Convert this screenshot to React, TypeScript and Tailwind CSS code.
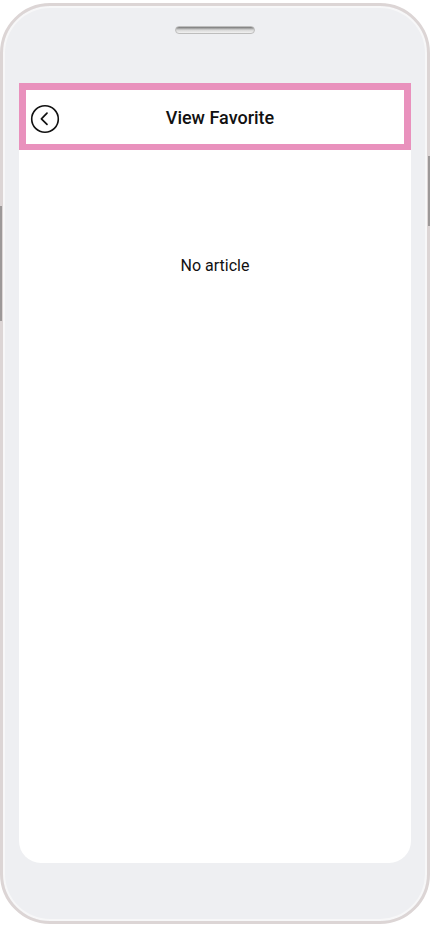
import React from "react";

function BackIcon() {
  return (
    <svg width="30" height="30" viewBox="0 0 30 30" fill="none">
      <circle cx="15" cy="15" r="13.3" stroke="#111" strokeWidth="1.6" />
      <path d="M17 9.2 L11.4 14.8 L17 20.4" stroke="#111" strokeWidth="1.7" strokeLinecap="round" strokeLinejoin="round" />
    </svg>
  );
}

export default function App() {
  return (
    <div className="w-[430px] h-[925px] bg-white pt-[3px]" style={{ fontFamily: "Roboto, 'Liberation Sans', sans-serif" }}>
      <div className="relative w-[430px] h-[921px] rounded-[50px] border-[3px] border-[#dcd5d5] bg-[#eeeff2] shadow-[inset_0_0_0_2px_#f7f7f8] flex flex-col items-center">
        {/* side buttons */}
        <div className="absolute left-[-3px] top-[200px] w-[2px] h-[115px] bg-[#9c9898]" />
        <div className="absolute right-[-3px] top-[150px] w-[2px] h-[70px] bg-[#9c9898]" />

        {/* speaker */}
        <div className="mt-[20px] w-[80px] h-[8px] rounded-full bg-gradient-to-b from-[#777] via-[#d8d8d8] to-[#f2f2f2] border border-[#bdbdbd]" />

        {/* screen */}
        <div className="mt-[49px] w-[392px] h-[780px] bg-white rounded-b-[22px] flex flex-col">
          <div className="h-[67px] border-[7px] border-b-[6px] border-[#e991bd] flex items-center">
            <div className="pl-[4px] pt-[3px] flex items-center">
              <BackIcon />
            </div>
            <div className="flex-1 text-center text-[18px] font-medium text-[#111] pl-[2px] pr-[26px]">View Favorite</div>
          </div>
          <div className="pt-[104px] text-center text-[16px] text-[#111]">No article</div>
        </div>
      </div>
    </div>
  );
}
